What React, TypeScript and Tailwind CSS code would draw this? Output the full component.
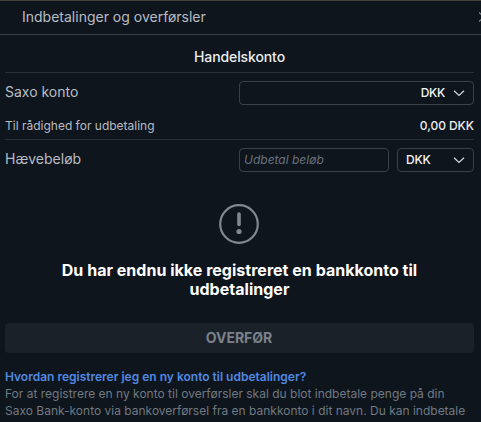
import { type ReactNode } from 'react';

const helpText =
    "For at registrere en ny konto til overførsler skal du blot indbetale penge på din Saxo Bank-konto via bankoverførsel fra en bankkonto i dit navn. Du kan indbetale på den konto, så pengene står klar.";

const Chevron = () => (
    <svg width="12" height="12" viewBox="0 0 12 12" fill="none" stroke="#d5d9de" strokeWidth="1.2">
        <path d="M1 3.8 6 8.5 11 3.8" />
    </svg>
);

const Row = ({ label, children }: { label: string; children: ReactNode }) => (
    <div className="flex items-center justify-between">
        <span className="pb-0.5 text-[14px] leading-5 text-[#b9bdc3]">{label}</span>
        {children}
    </div>
);

export default function App() {
    return (
        <div className="flex h-[422px] w-[481px] flex-col overflow-hidden border-t border-[#44443f] bg-[#0e151d] font-['Inter',sans-serif]">
            <header className="flex h-[34px] shrink-0 items-center justify-between border-b border-[#3a414b] pl-[22px]">
                <h1 className="pb-0.5 text-[14px] leading-5 text-[#b9bdc3]">Indbetalinger og overførsler</h1>
                <svg width="2" height="10" viewBox="0 0 2 10" fill="none" stroke="#858b94" strokeWidth="1.2" className="mb-0.5">
                    <path d="M0 0.5 5 5 0 9.5" />
                </svg>
            </header>

            <main className="flex flex-col pr-[7px] pl-[5px]">
                <h2 className="h-[38px] border-b border-[#2a313b] pt-3 text-center text-[14px] leading-5 font-medium tracking-[-0.1px] text-[#eceef0]">
                    Handelskonto
                </h2>

                <div className="pt-2">
                    <Row label="Saxo konto">
                        <button className="flex h-6 w-[235px] items-center justify-end gap-2 rounded border border-[#3a414b] pr-2 text-[12px] font-medium tracking-[-0.3px] text-[#f4f5f6]">
                            DKK
                            <Chevron />
                        </button>
                    </Row>
                </div>

                <div className="mt-[11px] flex h-6 items-start justify-between border-b border-[#2a313b] text-[12px] leading-5">
                    <span className="text-[#b9bdc3]">Til rådighed for udbetaling</span>
                    <span className="font-medium tracking-[-0.05px] text-[#eceef0]">0,00 DKK</span>
                </div>

                <div className="pt-2">
                    <Row label="Hævebeløb">
                        <div className="flex gap-2">
                            <input
                                placeholder="Udbetal beløb"
                                className="h-6 w-[150px] rounded border border-[#3a414b] px-1 pb-0.5 text-[12px] italic placeholder:text-[#69717c]"
                            />
                            <button className="flex h-6 w-[77px] items-center justify-between rounded border border-[#3a414b] pr-2 pl-2 text-[12px] font-medium tracking-[-0.2px] text-[#f4f5f6]">
                                DKK
                                <Chevron />
                            </button>
                        </div>
                    </Row>
                </div>

                <div className="flex flex-col items-center pt-8">
                    <svg width="40" height="40" viewBox="0 0 40 40" fill="none" stroke="#828892" className="mr-0.5">
                        <circle cx="20" cy="20" r="18.8" strokeWidth="2.2" />
                        <path d="M20 10v10.5" strokeWidth="3.6" strokeLinecap="round" />
                        <circle cx="20" cy="27.5" r="2.6" fill="#828892" stroke="none" />
                    </svg>
                    <p className="mt-[17px] w-[380px] text-center text-[16px] leading-[19px] font-bold tracking-[0.02px] text-white">
                        Du har endnu ikke registreret en bankkonto til udbetalinger
                    </p>
                </div>

                <button className="mt-6 h-[30px] rounded bg-[#1a2129] pr-px pb-0.5 text-[14px] font-bold text-[#7b828c]">
                    OVERFØR
                </button>

                <div className="mt-[15px] text-[12px] leading-[17px]">
                    <a className="block font-semibold text-[#5288e0]">Hvordan registrerer jeg en ny konto til udbetalinger?</a>
                    <p className="text-[#717982]">{helpText}</p>
                </div>
            </main>
        </div>
    );
}
